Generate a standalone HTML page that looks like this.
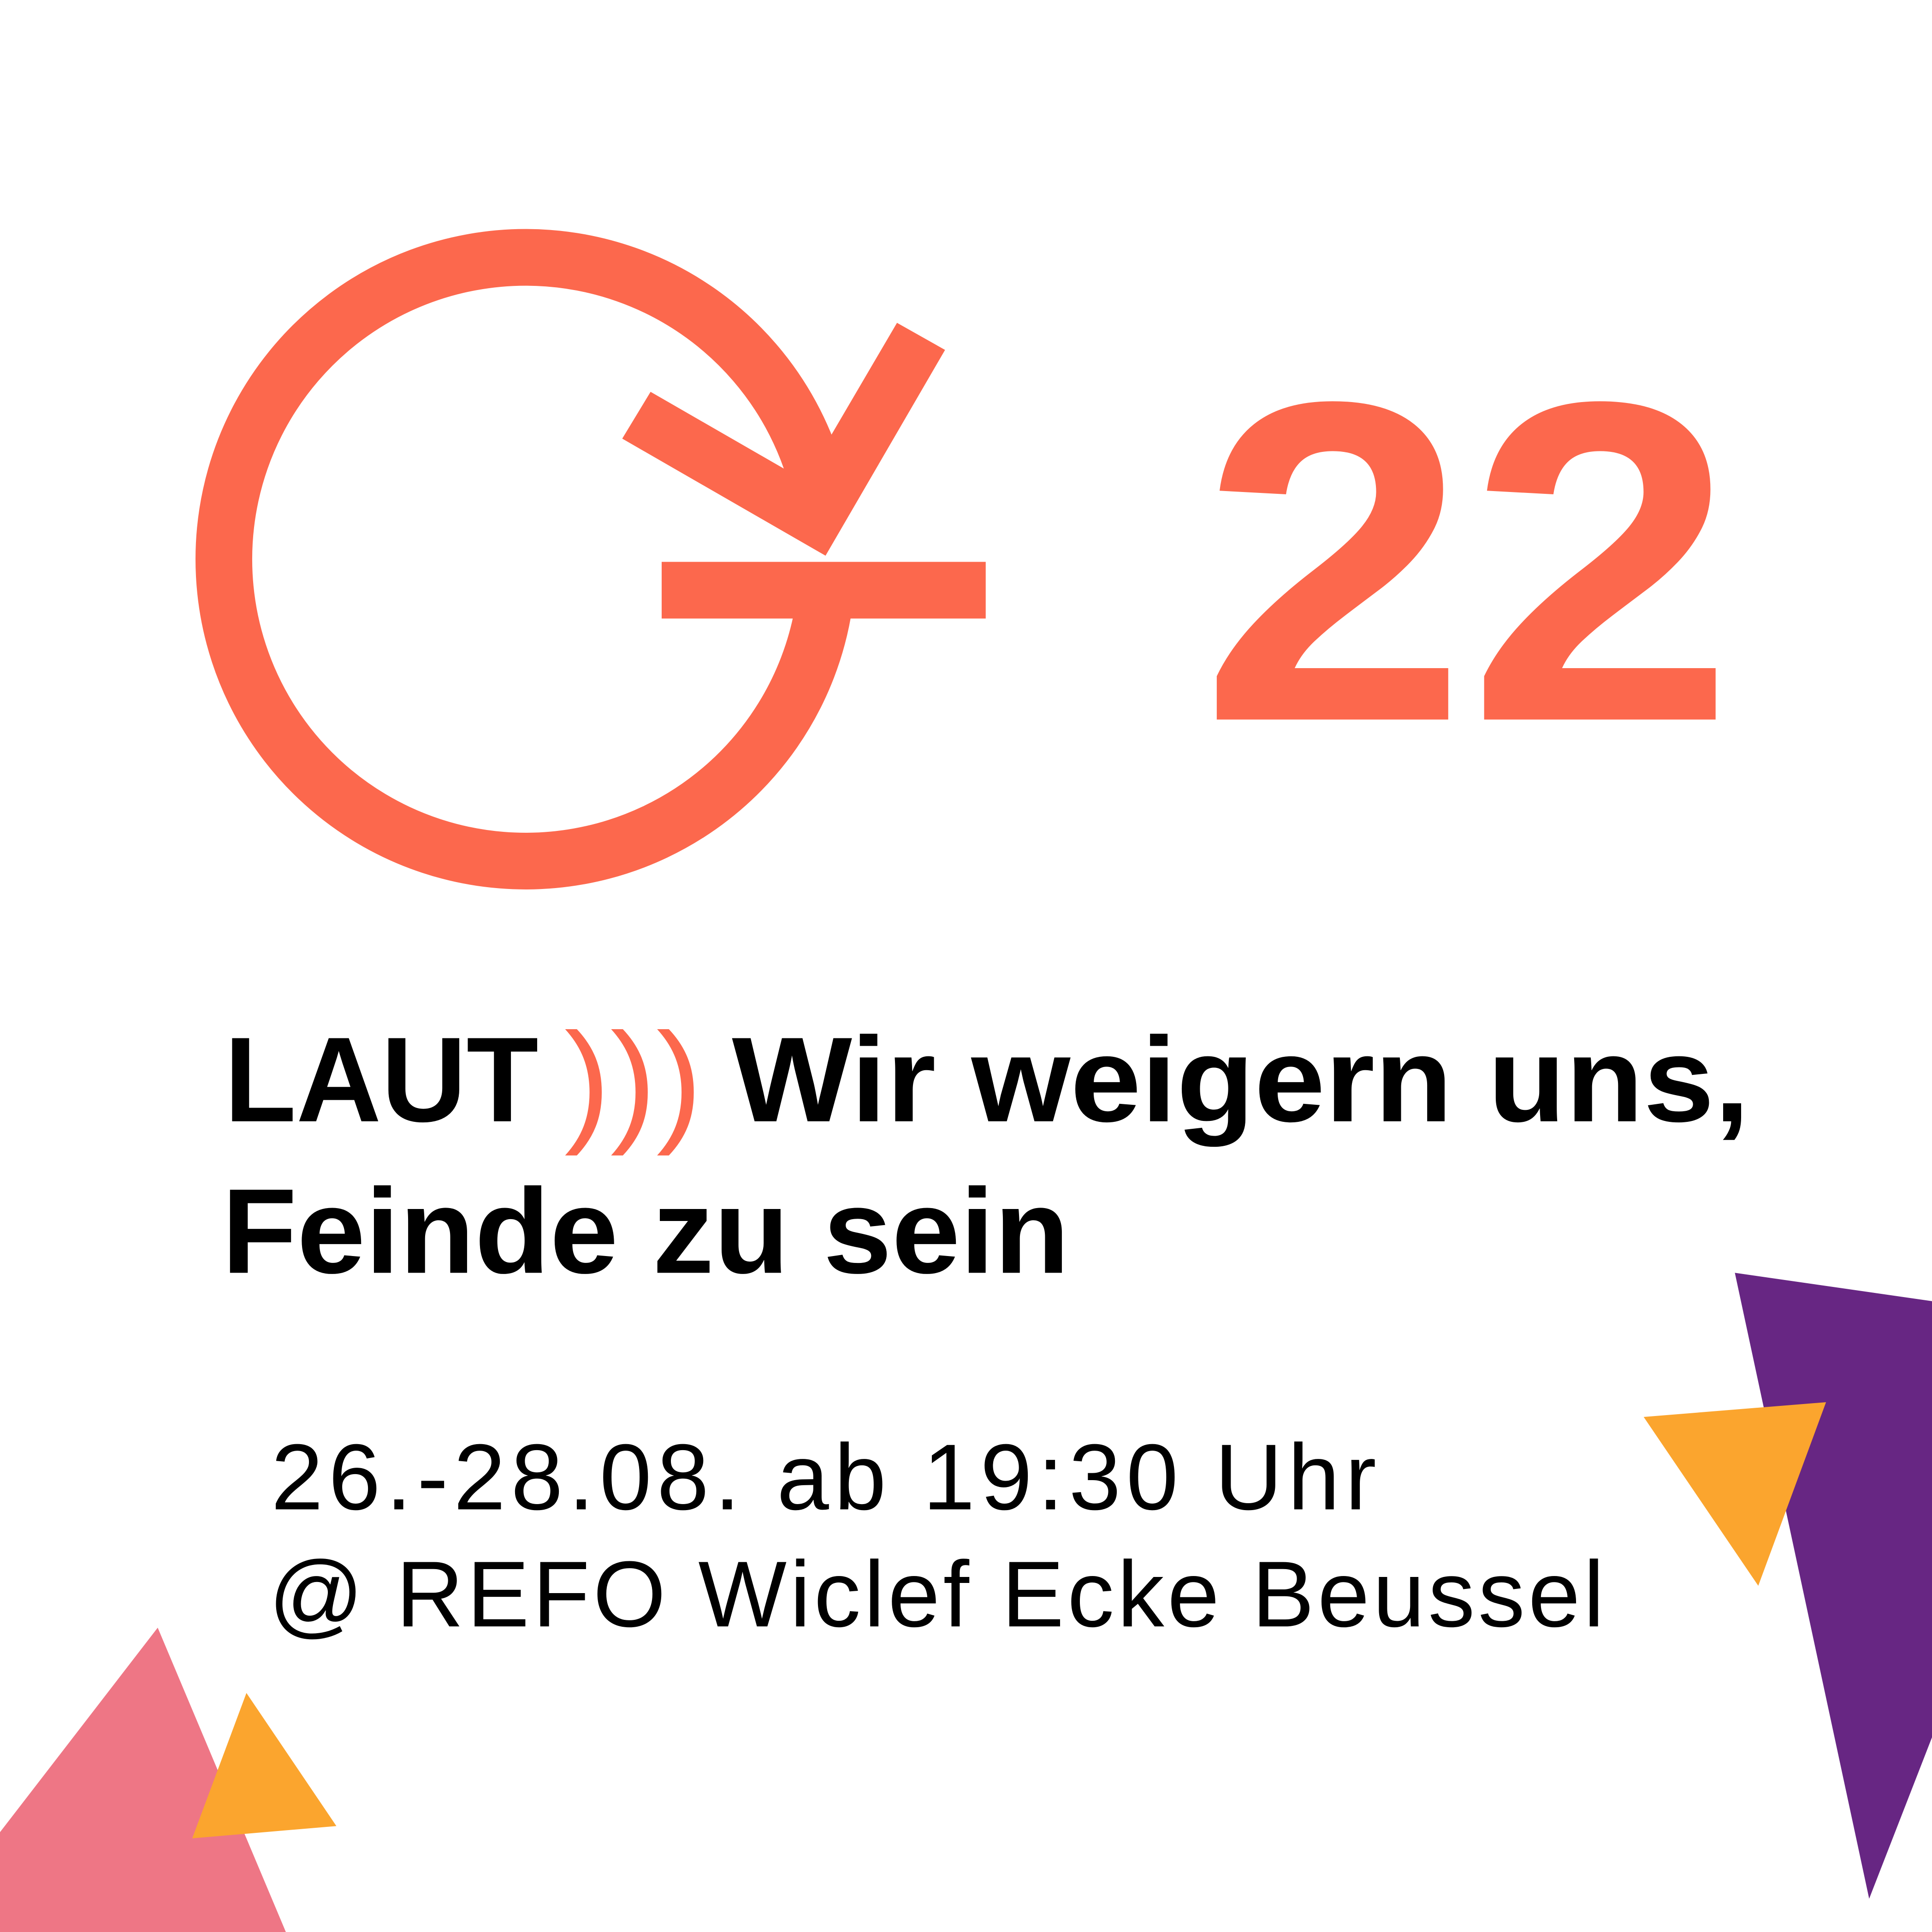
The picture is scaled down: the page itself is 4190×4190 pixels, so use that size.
<!DOCTYPE html>
<html><head><meta charset="utf-8"><style>html,body{margin:0;padding:0;background:#fff}svg{display:block}</style></head>
<body>
<svg width="4190" height="4190" viewBox="0 0 1568 1568" xmlns="http://www.w3.org/2000/svg">
<rect width="1568" height="1568" fill="#fff"/>
<path d="M 664 393 A 245 245 0 1 0 669 490" fill="none" stroke="#FC684D" stroke-width="46"/>
<rect x="537" y="456" width="263" height="46" fill="#FC684D"/>
<polygon points="528,318 653,390 728,262 767,284 670,451 505,356" fill="#FC684D"/>
<text x="974" y="584" font-family="Liberation Sans, sans-serif" font-weight="bold" font-size="370" fill="#FC684D" textLength="434" lengthAdjust="spacingAndGlyphs">22</text>
<g font-family="Liberation Sans, sans-serif" font-weight="bold" font-size="98">
<text x="182" y="910" textLength="255" lengthAdjust="spacingAndGlyphs" fill="#000">LAUT</text>
<text x="458" y="915" textLength="112" lengthAdjust="spacingAndGlyphs" fill="#FC684D" font-weight="normal" font-size="110">)))</text>
<text x="594" y="910" textLength="826" lengthAdjust="spacingAndGlyphs" fill="#000">Wir weigern uns,</text>
<text x="180" y="1033" textLength="688" lengthAdjust="spacingAndGlyphs" fill="#000">Feinde zu sein</text>
</g>
<g font-family="Liberation Sans, sans-serif" font-size="76" fill="#000">
<text x="220" y="1225" textLength="897" lengthAdjust="spacing">26.-28.08. ab 19:30 Uhr</text>
<text x="218" y="1320" textLength="1084" lengthAdjust="spacing">@ REFO Wiclef Ecke Beussel</text>
</g>
<polygon points="1408,1033 1568,1056 1568,1410 1517,1541" fill="#672683"/>
<polygon points="1334,1150 1482,1138 1427,1287" fill="#FBA52E"/>
<polygon points="0,1487 128,1321 232,1568 0,1568" fill="#EE7685"/>
<polygon points="200,1374 273,1482 156,1492" fill="#FBA52E"/>
</svg>
</body></html>
